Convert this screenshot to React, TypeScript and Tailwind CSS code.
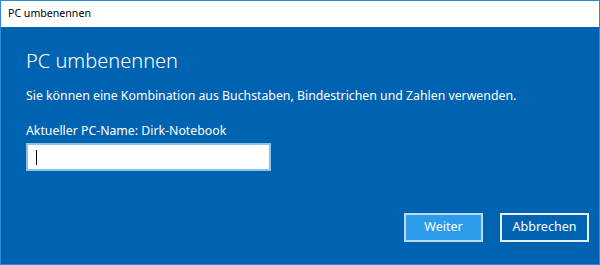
export default function App() {
  return (
    <div
      className="flex h-[265px] w-[600px] flex-col border border-[#2e8ad8] bg-[#0063b1] text-white"
      style={{ fontFamily: '"Noto Sans", "Open Sans", sans-serif' }}
    >
      {/* Titelleiste */}
      <div className="flex h-[26px] items-center bg-white pl-[7px] text-[10.6px] text-black">
        PC umbenennen
      </div>

      <div className="flex flex-col px-[25px]">
        <h1 className="mt-[20px] text-[20px] font-light leading-[28px]">PC umbenennen</h1>
        <p className="mt-[12px] text-[12.3px] leading-[18px]">
          Sie können eine Kombination aus Buchstaben, Bindestrichen und Zahlen verwenden.
        </p>
        <p className="mt-[17px] text-[12.3px] leading-[18px]">Aktueller PC-Name: Dirk-Notebook</p>
        <div className="mt-[3px] flex h-[28px] w-[245px] items-center border-2 border-[#8ac4ee] bg-white pl-[8px]">
          <span className="h-[15px] w-[1px] bg-black" />
        </div>
      </div>

      <div className="mt-auto mb-[22px] flex justify-end gap-[17px] pr-[10px]">
        <button
          type="button"
          className="h-[29px] w-[79px] border-2 border-[#b9dcf5] bg-[#2c9bea] text-[12.5px]"
        >
          Weiter
        </button>
        <button
          type="button"
          className="h-[29px] w-[89px] border-2 border-[#e4f0fa] bg-[#0063b1] text-[12.5px]"
        >
          Abbrechen
        </button>
      </div>
    </div>
  )
}
